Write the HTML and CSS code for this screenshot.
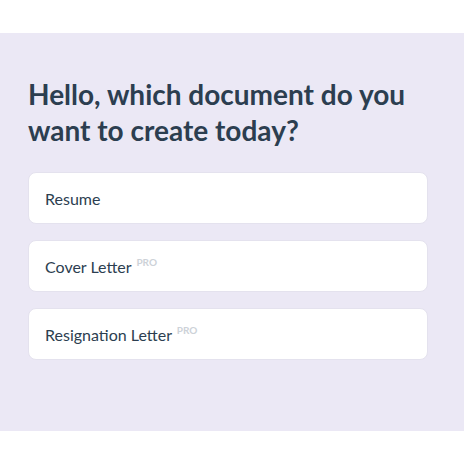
FILE: index.html
```html
<!DOCTYPE html>
<html lang="en">
<head>
    <meta charset="UTF-8">
    <meta name="viewport" content="width=device-width, initial-scale=1.0">
    <title>Create a document</title>
    <link rel="stylesheet" href="styles.css">
</head>
<body>

<div class="panel">
    <h1>Hello, which document do you want to create today?</h1>

    <div class="doc-list">
        <div class="doc-card">Resume</div>
        <div class="doc-card">Cover Letter <span class="pro">PRO</span></div>
        <div class="doc-card">Resignation Letter <span class="pro">PRO</span></div>
    </div>
</div>

</body>
</html>
```

FILE: styles.css
```css
body {
    font-family: Lato, "Open Sans", sans-serif;
    margin: 0;
    padding-top: 33px;
    background-color: #ffffff;
    color: #2c3e50;
}

.panel {
    background-color: #ebe8f5;
    padding: 43px 36px 70px 28px;
    height: 398px;
    box-sizing: border-box;
}

h1 {
    font-size: 28px;
    line-height: 36px;
    font-weight: 700;
    margin: 0 0 24px 0;
    color: #2c3e50;
}

.doc-list {
    display: flex;
    flex-direction: column;
    gap: 16px;
}

.doc-card {
    background-color: #ffffff;
    border: 1px solid #e4e2ee;
    border-radius: 8px;
    padding: 16px 16px 14px;
    height: 52px;
    box-sizing: border-box;
    font-size: 16px;
    line-height: 20px;
    cursor: pointer;
}

.pro {
    font-size: 10px;
    line-height: 0;
    font-weight: 700;
    color: #cdd2d8;
    vertical-align: 7px;
    margin-left: 1px;
}
```
